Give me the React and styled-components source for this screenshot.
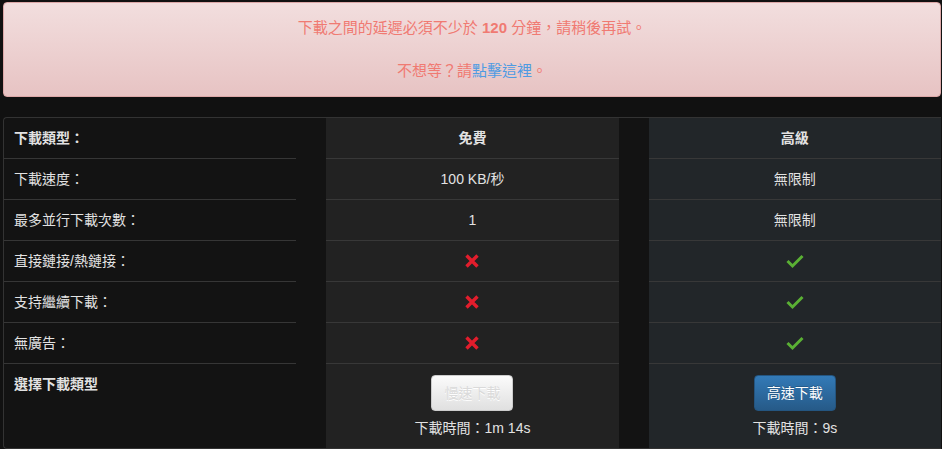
import React from 'react'
import styled, { createGlobalStyle } from 'styled-components'

const GlobalStyle = createGlobalStyle`
  html, body {
    margin: 0;
    background: #111111;
  }
  body {
    font-family: "Liberation Sans", Arial, "Noto Sans CJK TC", sans-serif;
    font-size: 14px;
    line-height: 20px;
    color: #dddddd;
  }
`

const Page = styled.div`
  padding: 2px 1px 0 3px;
`

const Alert = styled.div`
  border: 1px solid #dca7a7;
  border-radius: 4px;
  background: linear-gradient(#f2dede, #e7c3c3);
  padding: 15px;
  text-align: center;
  color: #f07a72;
  font-size: 15px;
  display: flex;
  flex-direction: column;
  gap: 23px;
`

const Line = styled.p`
  margin: 0;
  b {
    font-weight: bold;
  }
  a {
    color: #4f9be2;
    text-decoration: none;
  }
`

const Table = styled.div`
  margin-top: 20px;
  border: 1px solid #333333;
  border-right: none;
  border-radius: 4px 0 0 4px;
  background: #131313;
  display: grid;
  grid-template-columns: 1fr 30px 1fr 30px 1fr;
  height: 330px;
  grid-template-rows: repeat(6, 41px) 1fr;
`

const Label = styled.div`
  grid-column: 1;
  padding: 10px;
  font-weight: ${p => (p.$bold ? 'bold' : 'normal')};
  border-bottom: ${p => (p.$last ? 'none' : '1px solid #363636')};
  color: #e2e2e2;
`

const Cell = styled.div`
  grid-column: ${p => (p.$premium ? 5 : 3)};
  background: ${p => (p.$premium ? '#222629' : '#222222')};
  border-bottom: ${p => (p.$last ? 'none' : '1px solid #383838')};
  font-weight: ${p => (p.$bold ? 'bold' : 'normal')};
  display: flex;
  flex-direction: column;
  align-items: center;
  justify-content: ${p => (p.$last ? 'flex-start' : 'center')};
  padding-top: ${p => (p.$last ? '11px' : '0')};
  color: #e2e2e2;
`

const Button = styled.button`
  font-family: inherit;
  font-size: 14px;
  line-height: 20px;
  padding: 7px 12px;
  border-radius: 4px;
  cursor: pointer;
  border: 1px solid ${p => (p.$primary ? '#245580' : '#cccccc')};
  background: ${p =>
    p.$primary
      ? 'linear-gradient(#337ab7, #265a88)'
      : 'linear-gradient(#fbfbfb, #e0e0e0)'};
  color: ${p => (p.$primary ? '#ffffff' : '#dadada')};
  text-shadow: ${p => (p.$primary ? '0 -1px 0 rgba(0,0,0,.2)' : '0 1px 0 #fff')};
`

const Time = styled.div`
  margin-top: 7px;
`

const Cross = () => (
  <svg width="16" height="16" viewBox="0 0 16 16">
    <path d="M2.5 2.5 L13.5 13.5 M13.5 2.5 L2.5 13.5" stroke="#e21d2c" strokeWidth="3.4" strokeLinecap="butt" />
  </svg>
)

const Check = () => (
  <svg width="18" height="16" viewBox="0 0 18 16">
    <path d="M1.5 8 L6.5 13 L16.5 3" stroke="#5ab034" strokeWidth="3" fill="none" />
  </svg>
)

const rows = [
  ['下載速度：', '100 KB/秒', '無限制'],
  ['最多並行下載次數：', '1', '無限制'],
  ['直接鏈接/熱鏈接：', 'x', 'v'],
  ['支持繼續下載：', 'x', 'v'],
  ['無廣告：', 'x', 'v'],
]

const show = v => (v === 'x' ? <Cross /> : v === 'v' ? <Check /> : v)

export default function App() {
  return (
    <Page>
      <GlobalStyle />
      <Alert>
        <Line>
          下載之間的延遲必須不少於 <b>120</b> 分鐘，請稍後再試。
        </Line>
        <Line>
          不想等？請<a href="#">點擊這裡</a>。
        </Line>
      </Alert>
      <Table>
        <Label $bold>下載類型：</Label>
        <Cell $bold>免費</Cell>
        <Cell $bold $premium>高級</Cell>
        {rows.map(([label, free, premium]) => (
          <React.Fragment key={label}>
            <Label>{label}</Label>
            <Cell>{show(free)}</Cell>
            <Cell $premium>{show(premium)}</Cell>
          </React.Fragment>
        ))}
        <Label $bold $last>選擇下載類型</Label>
        <Cell $last>
          <Button disabled>慢速下載</Button>
          <Time>下載時間：1m 14s</Time>
        </Cell>
        <Cell $last $premium>
          <Button $primary>高速下載</Button>
          <Time>下載時間：9s</Time>
        </Cell>
      </Table>
    </Page>
  )
}
